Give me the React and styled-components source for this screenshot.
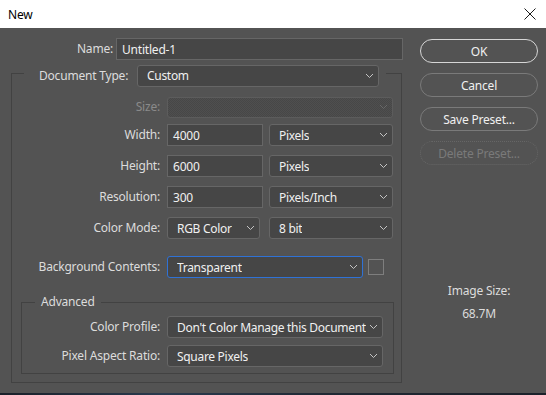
import React from 'react';
import styled, { createGlobalStyle } from 'styled-components';

const GlobalStyle = createGlobalStyle`
  html, body {
    margin: 0;
    padding: 0;
    background: #1b232c;
  }
  body {
    font-family: "Noto Sans", "Segoe UI", sans-serif;
    font-size: 12px;
    letter-spacing: -0.2px;
  }
`;

const Window = styled.div`
  display: flex;
  flex-direction: column;
  width: 546px;
  height: 395px;
  overflow: hidden;
`;

const TitleBar = styled.div`
  display: flex;
  align-items: center;
  justify-content: space-between;
  height: 28px;
  flex: none;
  padding: 0 10px 0 8px;
  box-sizing: border-box;
  background: #ffffff;
  color: #000;
  font-size: 12px;
`;

const Body = styled.div`
  display: flex;
  flex: 1;
  background: #535353;
  color: #dcdcdc;
`;

const Strip = styled.div`
  height: 2px;
  flex: none;
  background: linear-gradient(90deg, #1a2029 0%, #2a3a4e 30%, #202833 60%, #1b212a 100%);
`;

const LeftColumn = styled.div`
  width: 420px;
  flex: none;
  padding-top: 10px;
  box-sizing: border-box;
`;

const RightColumn = styled.div`
  width: 118px;
  flex: none;
  display: flex;
  flex-direction: column;
  gap: 10px;
  padding-top: 11px;
`;

const NameRow = styled.div`
  display: flex;
  align-items: center;
  gap: 3px;
  height: 22px;
`;

const NameLabel = styled.span`
  width: 113px;
  text-align: right;
  line-height: 22px;
`;

const Group = styled.fieldset`
  margin: ${p => p.$top}px 0 0 ${p => p.$left}px;
  width: ${p => p.$width}px;
  box-sizing: border-box;
  padding: ${p => p.$pad};
  border: 1px solid #424242;
  min-width: 0;
`;

const Legend = styled.legend`
  display: flex;
  align-items: flex-start;
  gap: 6px;
  height: 16px;
  margin-left: ${p => p.$ml}px;
  padding: 0 ${p => p.$pr}px 0 ${p => p.$pl}px;
  line-height: 16px;
  color: #dcdcdc;
`;

const Row = styled.div`
  display: grid;
  grid-template-columns: ${p => p.$label}px auto;
  column-gap: 7px;
  align-items: center;
  height: ${p => p.$h || 22}px;
  margin-top: ${p => p.$mt || 0}px;
`;

const Label = styled.span`
  width: ${p => (p.$w ? `${p.$w}px` : 'auto')};
  text-align: ${p => p.$align || 'right'};
  white-space: nowrap;
  line-height: 22px;
  color: ${p => (p.$disabled ? '#8a8a8a' : '#dcdcdc')};
`;

const Controls = styled.div`
  display: flex;
  align-items: center;
  gap: ${p => p.$gap ?? 6}px;
`;

const TextField = styled.div`
  display: flex;
  align-items: center;
  width: ${p => p.$w}px;
  height: 22px;
  box-sizing: border-box;
  padding: 0 5px;
  background: #464646;
  border: 1px solid #666666;
  color: #f0f0f0;
  white-space: nowrap;
`;

const SelectBox = styled.div`
  display: flex;
  align-items: center;
  justify-content: space-between;
  gap: 1px;
  width: ${p => p.$w}px;
  height: ${p => p.$h || 22}px;
  box-sizing: border-box;
  padding: 0 2px 0 9px;
  border-radius: 3px;
  border: 1px solid ${p => (p.$focused ? '#2f72d6' : p.$disabled ? '#5c5c5c' : '#666666')};
  background: ${p =>
    p.$disabled
      ? 'repeating-conic-gradient(#4f4f4f 0% 25%, #474747 0% 50%) 0 0 / 2px 2px'
      : '#464646'};
  color: #f0f0f0;
  letter-spacing: -0.3px;
  white-space: nowrap;
  overflow: hidden;

  & > span {
    overflow: hidden;
  }
`;

const Swatch = styled.div`
  width: 16px;
  height: 16px;
  box-sizing: border-box;
  border: 1px solid #7e7e7e;
`;

const Button = styled.div`
  display: flex;
  align-items: center;
  justify-content: center;
  height: 24px;
  box-sizing: border-box;
  border-radius: 12px;
  border: ${p =>
    p.$primary ? '1.5px solid #d6d6d6' : p.$disabled ? '1px dotted #666666' : '1px solid #7a7a7a'};
  color: ${p => (p.$disabled ? '#7a7a7a' : '#f0f0f0')};
  font-size: 12px;
`;

const SizeInfo = styled.div`
  display: flex;
  flex-direction: column;
  align-items: center;
  gap: 7px;
  margin-top: 108px;
  line-height: 16px;
  color: #dcdcdc;
`;

const Chevron = ({ faint }) => (
  <svg width="9" height="6" viewBox="0 0 9 6" style={{ flex: 'none', marginRight: 2 }}>
    <polyline
      points="1,1 4.5,4.5 8,1"
      fill="none"
      stroke={faint ? '#6a6a6a' : '#c4c4c4'}
      strokeWidth="1"
    />
  </svg>
);

const CloseIcon = () => (
  <svg width="12" height="12" viewBox="0 0 12 12">
    <path d="M0.5 0.5 L11.5 11.5 M11.5 0.5 L0.5 11.5" stroke="#1a1a1a" strokeWidth="1" />
  </svg>
);

const Select = ({ width, height, disabled, focused, children }) => (
  <SelectBox $w={width} $h={height} $disabled={disabled} $focused={focused}>
    <span>{children}</span>
    <Chevron faint={disabled} />
  </SelectBox>
);

const App = () => (
  <>
    <GlobalStyle />
    <Window>
      <TitleBar>
        <span>New</span>
        <CloseIcon />
      </TitleBar>
      <Body>
        <LeftColumn>
          <NameRow>
            <NameLabel>Name:</NameLabel>
            <TextField $w={287}>Untitled-1</TextField>
          </NameRow>

          <Group $top={5} $left={11} $width={391} $pad="15px 7px 8px 9px">
            <Legend $ml={3} $pl={15} $pr={7}>
              <Label $w={92} $align="left">Document Type:</Label>
              <Select width={242}>Custom</Select>
            </Legend>

            <Row $label={139} $h={21}>
              <Label $disabled>Size:</Label>
              <Select width={226} height={21} disabled />
            </Row>
            <Row $label={139} $mt={7}>
              <Label>Width:</Label>
              <Controls>
                <TextField $w={96}>4000</TextField>
                <Select width={124}>Pixels</Select>
              </Controls>
            </Row>
            <Row $label={139} $mt={9}>
              <Label>Height:</Label>
              <Controls>
                <TextField $w={96}>6000</TextField>
                <Select width={124}>Pixels</Select>
              </Controls>
            </Row>
            <Row $label={139} $mt={9}>
              <Label>Resolution:</Label>
              <Controls>
                <TextField $w={96}>300</TextField>
                <Select width={124}>Pixels/Inch</Select>
              </Controls>
            </Row>
            <Row $label={139} $mt={9}>
              <Label>Color Mode:</Label>
              <Controls $gap={9}>
                <Select width={93}>RGB Color</Select>
                <Select width={124}>8 bit</Select>
              </Controls>
            </Row>
            <Row $label={139} $mt={17}>
              <Label>Background Contents:</Label>
              <Controls $gap={5}>
                <Select width={196} focused>Transparent</Select>
                <Swatch />
              </Controls>
            </Row>

            <Group $top={16} $left={0} $width={373} $pad="6px 10px 6px 9px">
              <Legend $ml={4} $pl={6} $pr={6}>Advanced</Legend>
              <Row $label={129}>
                <Label>Color Profile:</Label>
                <Select width={216}>Don't Color Manage this Document</Select>
              </Row>
              <Row $label={129} $mt={7}>
                <Label>Pixel Aspect Ratio:</Label>
                <Select width={216}>Square Pixels</Select>
              </Row>
            </Group>
          </Group>
        </LeftColumn>

        <RightColumn>
          <Button $primary>OK</Button>
          <Button>Cancel</Button>
          <Button>Save Preset...</Button>
          <Button $disabled>Delete Preset...</Button>
          <SizeInfo>
            <span>Image Size:</span>
            <span>68.7M</span>
          </SizeInfo>
        </RightColumn>
      </Body>
      <Strip />
    </Window>
  </>
);

export default App;
